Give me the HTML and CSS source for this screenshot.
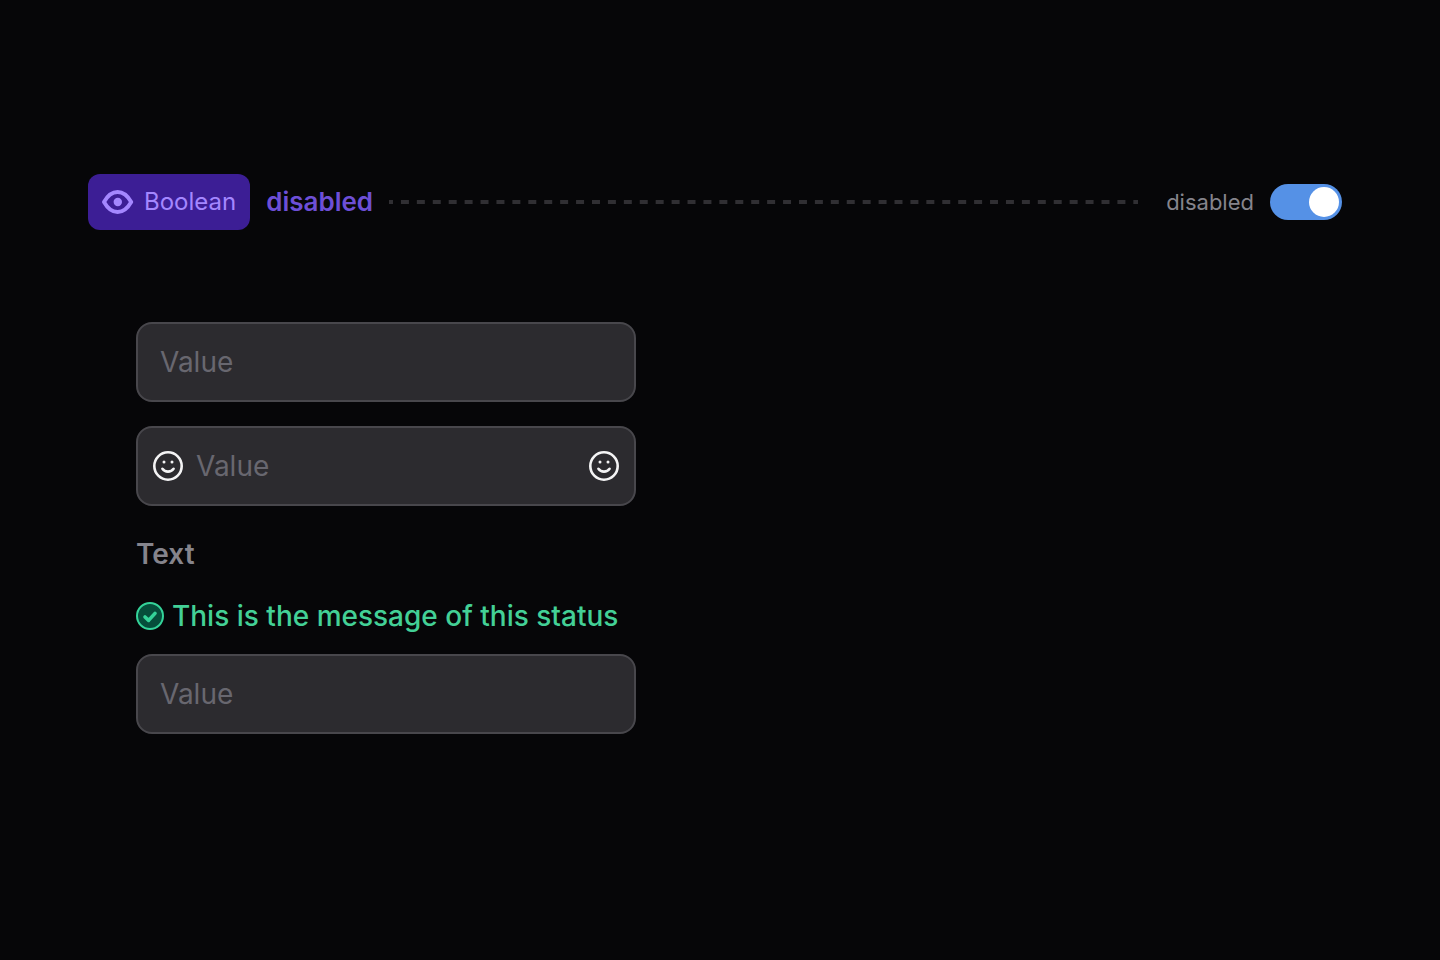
FILE: index.html
```html
<!DOCTYPE html>
<html lang="en">
<head>
<meta charset="utf-8">
<meta name="viewport" content="width=device-width, initial-scale=1">
<title>Boolean property: disabled</title>
<link rel="stylesheet" href="styles.css">
</head>
<body>
<svg class="sprite" aria-hidden="true">
  <symbol id="smile" viewBox="0 0 32 32">
    <circle cx="16" cy="16" r="13.7" fill="none" stroke="currentColor" stroke-width="2.6"/>
    <circle cx="12" cy="12" r="1.5" fill="currentColor"/>
    <circle cx="20" cy="12" r="1.5" fill="currentColor"/>
    <path d="M10.400 18.800c2.700 3.800 8.500 3.800 11.200 0" fill="none" stroke="currentColor" stroke-width="2.6" stroke-linecap="round"/>
  </symbol>
</svg>
<main class="page">
  <header class="property">
    <span class="badge">
      <svg class="badge-icon" viewBox="0 0 32 32" aria-hidden="true">
        <path d="M2 16C5.600 9.600 10.200 6 15.600 6s10 3.600 13.600 10C25.600 22.400 21 26 15.600 26S5.600 22.400 2 16z" fill="none" stroke="currentColor" stroke-width="3.900" stroke-linejoin="round"/>
        <circle cx="15.800" cy="16" r="4.200" fill="currentColor"/>
      </svg>
      Boolean
    </span>
    <h1 class="name">disabled</h1>
    <span class="leader"></span>
    <label class="switch-label">disabled
      <input class="switch" type="checkbox" role="switch" checked>
    </label>
  </header>
  <form class="form">
    <div class="field">
      <input class="input" type="text" placeholder="Value" aria-label="Value">
    </div>
    <div class="field field-icons">
      <svg class="field-icon" aria-hidden="true"><use href="#smile"/></svg>
      <input class="input" type="text" placeholder="Value" aria-label="Value with icons">
      <svg class="field-icon" aria-hidden="true"><use href="#smile"/></svg>
    </div>
    <div class="group">
      <label class="label" for="text">Text</label>
      <p class="status" id="status">
        <svg class="status-icon" viewBox="0 0 28 28" aria-hidden="true">
          <circle cx="14" cy="14" r="13" fill="#064e3b" stroke="#34d399" stroke-width="2"/>
          <path d="M9 15l3.600 3.400 6.400-7" fill="none" stroke="#34d399" stroke-width="3.600" stroke-linecap="round" stroke-linejoin="round"/>
        </svg>
        This is the message of this status
      </p>
      <div class="field">
        <input class="input" id="text" type="text" placeholder="Value" aria-describedby="status">
      </div>
    </div>
  </form>
</main>
</body>
</html>
```
FILE: styles.css
```css
* {
  box-sizing: border-box;
}

body {
  margin: 0;
  background: #060608;
  color: #85848c;
  font-family: Inter, "Liberation Sans", sans-serif;
  font-size: 28px;
  line-height: 40px;
}

.sprite {
  display: none;
}

.page {
  padding: 174px 98px 174px 88px;
}

.property {
  display: flex;
  align-items: center;
  gap: 16px;
}

.badge {
  display: flex;
  align-items: center;
  gap: 10px;
  height: 56px;
  padding: 0 14px;
  border-radius: 12px;
  background: #3c1e95;
  color: #a487ff;
  font-size: 24px;
}

.badge-icon {
  width: 32px;
  height: 32px;
}

.name {
  margin: 0;
  color: #6d4fd6;
  font-size: 26px;
  font-weight: 600;
}

.leader {
  flex: 1;
  height: 4px;
  background: linear-gradient(90deg, #302f33 25%, transparent 25% 75%, #302f33 75%) 0 0 / 16px 4px round;
}

.switch-label {
  display: flex;
  align-items: center;
  gap: 16px;
  margin-left: 12px;
  font-size: 22px;
}

.switch {
  display: flex;
  align-items: center;
  justify-content: flex-end;
  appearance: none;
  width: 72px;
  height: 36px;
  margin: 0;
  padding: 3px;
  border-radius: 18px;
  background: #5591e6;
}

.switch::before {
  content: "";
  width: 30px;
  height: 30px;
  border-radius: 50%;
  background: #ffffff;
}

.switch:not(:checked) {
  justify-content: flex-start;
  background: #48474c;
}

.form {
  display: flex;
  flex-direction: column;
  gap: 24px;
  max-width: 500px;
  margin: 92px 0 0 48px;
}

.field {
  display: flex;
  align-items: center;
  height: 80px;
  padding: 0 22px;
  border: 2px solid #48474c;
  border-radius: 16px;
  background: #2c2b2f;
}

.field-icons {
  gap: 12px;
  padding: 0 14px;
}

.field-icon {
  flex: none;
  width: 32px;
  height: 32px;
  color: #f4f4f5;
}

.input {
  flex: 1;
  min-width: 0;
  padding: 0;
  border: 0;
  outline: 0;
  background: none;
  color: #f4f4f5;
  font: inherit;
}

.input::placeholder {
  color: #68676f;
  opacity: 1;
}

.group {
  display: flex;
  flex-direction: column;
  padding-top: 4px;
}

.label {
  font-weight: 600;
}

.status {
  display: flex;
  align-items: center;
  gap: 8px;
  margin: 22px 0 18px;
  color: #43d096;
  font-weight: 500;
}

.status-icon {
  flex: none;
  width: 28px;
  height: 28px;
}
```
